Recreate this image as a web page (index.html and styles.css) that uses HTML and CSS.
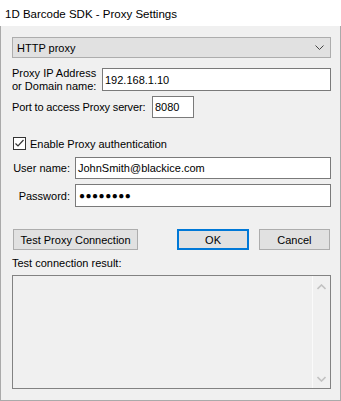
FILE: index.html
```html
<!DOCTYPE html>
<html>
<head>
<meta charset="utf-8">
<link rel="stylesheet" href="styles.css">
</head>
<body>
<div class="window">
  <div class="titlebar">1D Barcode SDK - Proxy Settings</div>
  <div class="content">
    <div class="combo">
      <span>HTTP proxy</span>
      <svg class="chev" width="9" height="5" viewBox="0 0 9 5"><path d="M0.5 0.5 L4.5 4.5 L8.5 0.5" fill="none" stroke="#444" stroke-width="1"/></svg>
    </div>
    <div class="row ip-row">
      <div class="lbl two">Proxy IP Address<br>or Domain name:</div>
      <div class="input ip">192.168.1.10</div>
    </div>
    <div class="row port-row">
      <div class="lbl">Port to access Proxy server:</div>
      <div class="input port">8080</div>
    </div>
    <div class="check-row">
      <span class="checkbox"><svg width="11" height="11" viewBox="0 0 11 11"><path d="M1.5 5.5 L4 8 L9.5 2" fill="none" stroke="#333" stroke-width="1.2"/></svg></span>
      <span>Enable Proxy authentication</span>
    </div>
    <div class="auth">
      <div class="alabel">User name:</div>
      <div class="input">JohnSmith@blackice.com</div>
      <div class="alabel pw-lbl">Password:</div>
      <div class="input pw">&#9679;&#9679;&#9679;&#9679;&#9679;&#9679;&#9679;&#9679;</div>
    </div>
    <div class="buttons">
      <div class="btn test">Test Proxy Connection</div>
      <div class="spacer"></div>
      <div class="btn ok">OK</div>
      <div class="btn cancel">Cancel</div>
    </div>
    <div class="result-lbl">Test connection result:</div>
    <div class="result">
      <div class="area"></div>
      <div class="scroll">
        <svg width="9" height="6" viewBox="0 0 9 6"><path d="M0.5 5 L4.5 1 L8.5 5" fill="none" stroke="#c2c2c2" stroke-width="1.6"/></svg>
        <svg width="9" height="6" viewBox="0 0 9 6"><path d="M0.5 1 L4.5 5 L8.5 1" fill="none" stroke="#c2c2c2" stroke-width="1.6"/></svg>
      </div>
    </div>
  </div>
</div>
</body>
</html>
```

FILE: styles.css
```css
* { box-sizing: border-box; }
html, body { margin: 0; padding: 0; background: #f0f0f0; }
body {
  font-family: "Liberation Sans", Arial, sans-serif;
  font-size: 11px;
  color: #000;
  white-space: nowrap;
}
.window {
  width: 341px;
  height: 401px;
  border: 1px solid #aaaaaa;
  border-top: none;
  background: #f0f0f0;
  display: flex;
  flex-direction: column;
}
.titlebar {
  height: 26px;
  background: #fff;
  margin: 0 -1px;
  padding-left: 5px;
  display: flex;
  align-items: center;
  font-size: 11.5px;
  padding-top: 1px;
}
.content {
  padding: 11px 9px 0 11px;
  display: flex;
  flex-direction: column;
}
.combo {
  height: 21px;
  background: #e1e1e1;
  border: 1px solid #adadad;
  display: flex;
  align-items: center;
  justify-content: space-between;
  padding: 0 6px 0 4px;
}
.row {
  display: flex;
  align-items: center;
}
.input {
  background: #fff;
  border: 1px solid #7a7a7a;
  height: 22px;
  display: flex;
  align-items: center;
  padding-left: 2px;
}
.ip-row { margin-top: 10px; align-items: flex-start; height: 23px; }
.lbl.two { line-height: 13px; width: 90px; margin-top: -1px; }
.input.ip { flex: 1; height: 23px; }
.port-row { margin-top: 5px; }
.port-row .lbl { width: 140px; letter-spacing: -0.15px; }
.input.port { width: 42px; }
.check-row {
  margin-top: 19px;
  display: flex;
  align-items: center;
  gap: 4px;
  height: 13px;
  padding-left: 1px;
}
.checkbox {
  width: 13px;
  height: 13px;
  border: 1px solid #333;
  background: #fff;
  display: flex;
  align-items: center;
  justify-content: center;
}
.auth {
  margin-top: 7px;
  display: grid;
  grid-template-columns: 58px 1fr;
  column-gap: 5px;
  row-gap: 5px;
  align-items: center;
}
.alabel { text-align: right; }
.input.pw { height: 23px; font-size: 10px; letter-spacing: 0.5px; padding-left: 3px; }
.buttons {
  margin-top: 22px;
  display: flex;
  gap: 10px;
  padding-left: 1px;
  padding-right: 1px;
}
.btn {
  height: 21px;
  background: #e1e1e1;
  border: 1px solid #adadad;
  display: flex;
  align-items: center;
  justify-content: center;
}
.btn.test { width: 130px; }
.spacer { width: 20px; }
.btn.ok { width: 74px; border: 2px solid #0078d7; }
.btn.cancel { width: 74px; }
.result-lbl { margin-top: 7px; height: 18px; }
.result {
  height: 114px;
  border: 1px solid #828282;
  display: flex;
}
.area { flex: 1; border-right: 1px solid #fafafa; }
.scroll {
  width: 17px;
  display: flex;
  flex-direction: column;
  justify-content: space-between;
  align-items: center;
  padding: 8px 0 6px;
}
```
